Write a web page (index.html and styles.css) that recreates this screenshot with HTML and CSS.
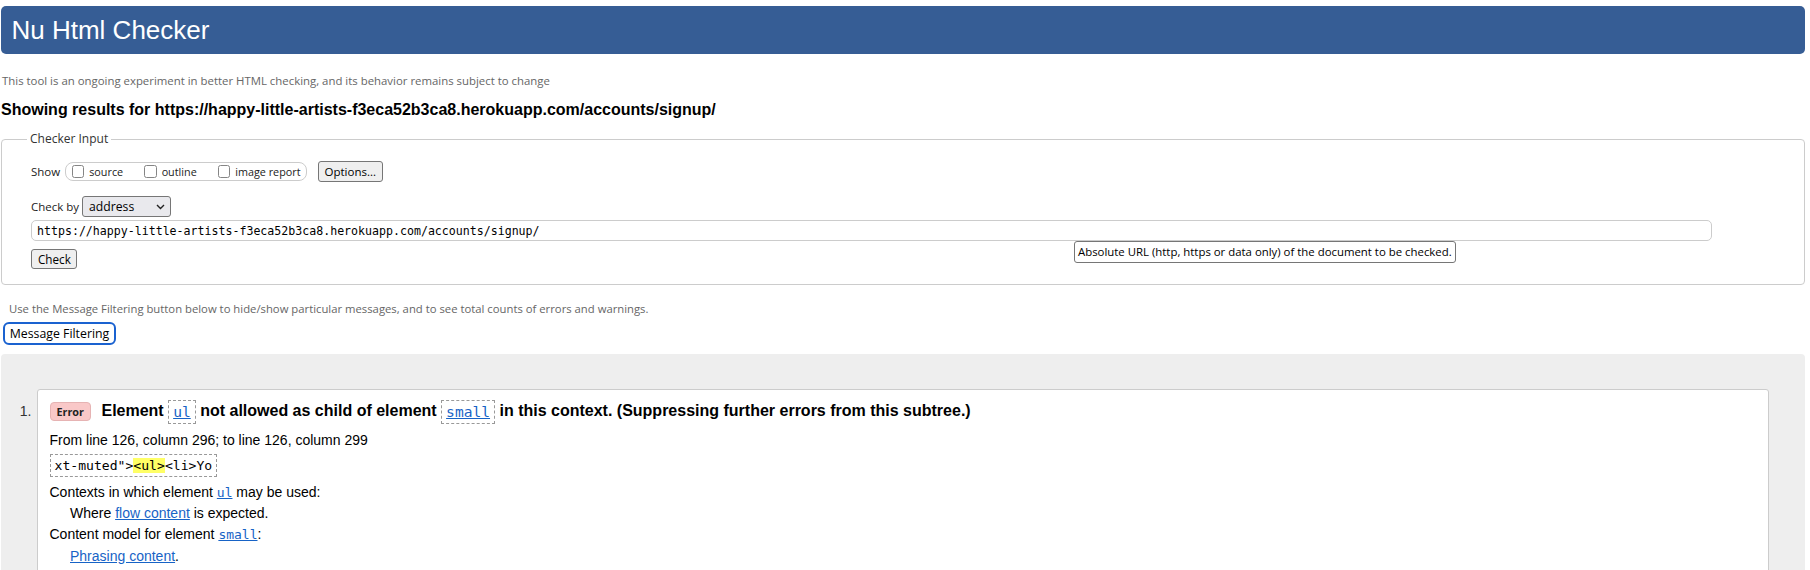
FILE: index.html
```html
<!DOCTYPE html>
<html lang="en">
<head>
<meta charset="utf-8">
<title>Nu Html Checker</title>
<link rel="stylesheet" href="styles.css">
</head>
<body>
<div class="page">
  <h1 class="banner">Nu Html Checker</h1>
  <p class="note">This tool is an ongoing experiment in better HTML checking, and its behavior remains subject to change</p>
  <h2 class="results-title">Showing results for https://happy-little-artists-f3eca52b3ca8.herokuapp.com/accounts/signup/</h2>

  <fieldset class="checker">
    <legend>Checker Input</legend>
    <div class="show-row">
      <span class="lbl">Show</span>
      <span class="opts">
        <label class="opt"><input type="checkbox" class="cb"><span>source</span></label>
        <label class="opt"><input type="checkbox" class="cb"><span>outline</span></label>
        <label class="opt"><input type="checkbox" class="cb"><span>image report</span></label>
      </span>
      <button class="btn options">Options...</button>
    </div>
    <div class="checkby-row">
      <span class="lbl">Check by</span>
      <span class="select-wrap">
        <select class="sel"><option>address</option></select>
        <svg class="chev" width="9" height="6" viewBox="0 0 9 6"><path d="M1 1 L4.5 4.5 L8 1" fill="none" stroke="#222" stroke-width="1.4"/></svg>
      </span>
    </div>
    <div class="url-wrap">
      <input class="url" type="text" value="https://happy-little-artists-f3eca52b3ca8.herokuapp.com/accounts/signup/">
      <div class="tooltip">Absolute URL (http, https or data only) of the document to be checked.</div>
    </div>
    <button class="btn check">Check</button>
  </fieldset>

  <p class="note2">Use the Message Filtering button below to hide/show particular messages, and to see total counts of errors and warnings.</p>
  <button class="filter">Message Filtering</button>

  <div class="results-area">
    <div class="msg">
      <div class="num">1.</div>
      <div class="box">
        <p class="head"><span class="badge">Error</span> <span class="htext">Element <code class="hcode"><a href="#">ul</a></code> not allowed as child of element <code class="hcode"><a href="#">small</a></code> in this context. (Suppressing further errors from this subtree.)</span></p>
        <p class="loc">From line 126, column 296; to line 126, column 299</p>
        <p class="extract"><code>xt-muted"&gt;<b>&lt;ul&gt;</b>&lt;li&gt;Yo</code></p>
        <dl class="details">
          <dt>Contexts in which element <a href="#"><code>ul</code></a> may be used:</dt>
          <dd>Where <a href="#">flow content</a> is expected.</dd>
          <dt>Content model for element <a href="#"><code>small</code></a>:</dt>
          <dd><a href="#">Phrasing content</a>.</dd>
        </dl>
      </div>
    </div>
  </div>
</div>
</body>
</html>
```
FILE: styles.css
```css
* { box-sizing: border-box; }

body {
  margin: 0;
  background: #fff;
  color: #000;
  font-family: "Liberation Sans", Arial, sans-serif;
}

.page {
  padding: 6px 5px 0 1px;
}

.banner {
  margin: 0;
  height: 48px;
  line-height: 48px;
  padding-left: 10.5px;
  background: #365d95;
  color: #fff;
  font-size: 26px;
  font-weight: normal;
  border-radius: 5px;
}

.note {
  margin: 19px 0 0 1px;
  font-family: "Open Sans", sans-serif;
  font-size: 11.4px;
  line-height: 16px;
  color: #666;
}

.results-title {
  margin: 11px 0 11px 0;
  font-size: 16px;
  line-height: 20px;
  font-weight: bold;
}

.checker {
  margin: 0;
  padding: 14px 29px 15px;
  border: 1px solid #ccc;
  border-radius: 4px;
  min-width: 0;
}

.checker legend {
  padding: 0 3px;
  margin-left: -4px;
  font-family: "Open Sans", sans-serif;
  font-size: 12px;
  line-height: 16px;
  color: #333;
}

.lbl {
  font-family: "Open Sans", sans-serif;
  font-size: 11.5px;
  color: #222;
}

.show-row {
  display: flex;
  align-items: center;
  height: 21px;
}

.opts {
  display: flex;
  align-items: center;
  margin-left: 5px;
  height: 19px;
  padding: 0 5px 0 5.5px;
  border: 1px solid #ccc;
  border-radius: 8px;
}

.opt {
  display: flex;
  align-items: center;
  gap: 5px;
  font-family: "Open Sans", sans-serif;
  font-size: 10.8px;
  color: #222;
}

.opt + .opt { margin-left: 21px; }

.cb {
  appearance: none;
  margin: 0;
  width: 12.5px;
  height: 12.5px;
  border: 1px solid #858585;
  border-radius: 2.5px;
  background: #fff;
}

.btn {
  height: 21px;
  padding: 0 6px;
  font-family: "Open Sans", sans-serif;
  font-size: 11.5px;
  color: #000;
  background: #efefef;
  border: 1px solid #767676;
  border-radius: 3px;
}

.options { margin-left: 11px; width: 65px; }

.checkby-row {
  display: flex;
  align-items: center;
  margin-top: 14px;
  height: 21px;
}

.select-wrap {
  position: relative;
  margin-left: 3px;
}

.sel {
  appearance: none;
  width: 89px;
  height: 21px;
  padding: 0 0 0 6px;
  font-family: "Open Sans", sans-serif;
  font-size: 12.2px;
  color: #000;
  background: #e9e9ed;
  border: 1px solid #767676;
  border-radius: 3px;
}

.chev {
  position: absolute;
  left: 74px;
  top: 8px;
}

.url-wrap {
  position: relative;
  margin-top: 3px;
}

.url {
  display: block;
  width: 1681px;
  height: 21px;
  padding: 0 5px;
  font-family: "DejaVu Sans Mono", monospace;
  font-size: 11.6px;
  color: #000;
  border: 1px solid #ccc;
  border-radius: 5px;
  background: #fff;
}

.tooltip {
  position: absolute;
  left: 1043px;
  top: 21px;
  width: 382px;
  height: 22px;
  padding: 0 3px;
  line-height: 20px;
  font-family: "Open Sans", sans-serif;
  font-size: 11.4px;
  color: #000;
  background: #fff;
  border: 1px solid #767676;
  border-radius: 3px;
  white-space: nowrap;
}

.check {
  margin-top: 7.5px;
  width: 46px;
  height: 20.5px;
  font-size: 11.7px;
}

.note2 {
  margin: 15.5px 0 0 8px;
  font-family: "Open Sans", sans-serif;
  font-size: 11.3px;
  line-height: 16px;
  color: #666;
}

.filter {
  display: block;
  margin: 5px 0 0 2px;
  width: 113px;
  height: 23px;
  padding: 0;
  font-family: "Open Sans", sans-serif;
  font-size: 12.3px;
  color: #000;
  background: #fff;
  border: 2px solid #1a62d0;
  border-radius: 6px;
}

.results-area {
  margin-top: 9px;
  background: #eee;
  border-radius: 4px 4px 0 0;
  padding: 35px 36px 40px 0;
}

.msg {
  display: flex;
}

.num {
  width: 36px;
  flex: none;
  padding: 10px 5.5px 0 0;
  text-align: right;
  font-size: 14px;
  line-height: 24px;
  color: #333;
}

.box {
  flex: 1;
  min-width: 0;
  background: #fff;
  border: 1px solid #ccc;
  border-radius: 3px 3px 0 0;
  padding: 9px 12px 12px 11.5px;
}

.box p { margin: 0; }

.head {
  font-size: 16px;
  line-height: 24px;
  font-weight: bold;
  white-space: nowrap;
}

.badge {
  display: inline-block;
  vertical-align: middle;
  width: 41.5px;
  height: 19.5px;
  line-height: 17.5px;
  padding: 0;
  margin-right: 6px;
  text-align: center;
  font-family: "Open Sans", sans-serif;
  font-size: 10.8px;
  font-weight: bold;
  color: #222;
  background: #f9c8c8;
  border: 1px solid #e6b3b3;
  border-radius: 4px;
}

.htext { vertical-align: middle; }

.hcode {
  display: inline-block;
  vertical-align: middle;
  padding: 1px 4px;
  line-height: 20px;
  border: 1px dashed #999;
  font-family: "DejaVu Sans Mono", monospace;
  font-size: 14.6px;
  font-weight: normal;
}

a { color: #1763c6; }

.loc {
  margin-top: 6px !important;
  font-size: 14px;
  line-height: 20px;
}

.extract { margin-top: 4px !important; }

.extract code {
  display: inline-block;
  padding: 1px 4px;
  line-height: 19px;
  border: 1px dashed #999;
  font-family: "DejaVu Sans Mono", monospace;
  font-size: 13.1px;
}

.extract b {
  font-weight: normal;
  background: #ffff66;
}

.details {
  margin: 5px 0 0;
  font-size: 14px;
  line-height: 21.3px;
}

.details dd { margin-left: 20.5px; }

.details code {
  font-family: "DejaVu Sans Mono", monospace;
  font-size: 13px;
}
```
